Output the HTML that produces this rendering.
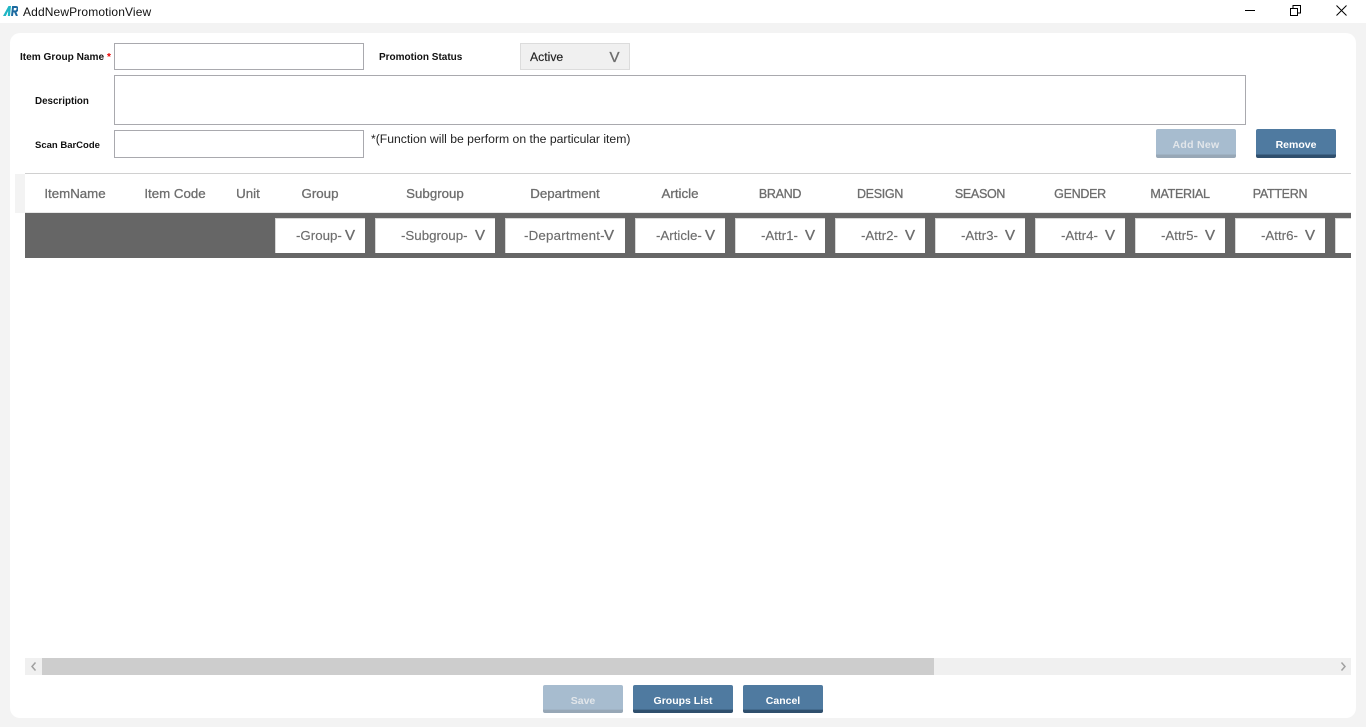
<!DOCTYPE html>
<html><head><meta charset="utf-8"><style>
html,body{margin:0;padding:0;width:1366px;height:727px;overflow:hidden;background:#fff;font-family:"Liberation Sans",sans-serif}
div,span{position:absolute;box-sizing:border-box}
.t{white-space:nowrap;line-height:16px}
.lb{font-size:10.1px;font-weight:bold;color:#111}
.in{border:1px solid #a9a9ae;background:#fff}
.h{font-size:13.3px;color:#6d6d6d;width:120px;text-align:center;top:186px;-webkit-text-stroke:.3px #6d6d6d}
.c{font-size:12.5px;letter-spacing:-.3px}
.dd{top:218px;height:35px;background:#fff;border:1px solid #d8d8d8;border-width:1px 0 0 1px}
.dt{top:228px;font-size:13.3px;color:#6d6d6d;-webkit-text-stroke:.15px #6d6d6d}
.v{top:227px;font-size:15px;color:#6d6d6d;line-height:18px;-webkit-text-stroke:.35px #6d6d6d}
.b{font-size:10.5px;font-weight:bold;color:#fff;text-align:center;border-radius:2px;background:linear-gradient(#4f7aa0 0,#4f7aa0 86%,#2f4f6d 90%,#2f4f6d 100%);line-height:32px}
.b.d{background:linear-gradient(#a7bccf 0,#a7bccf 86%,#97a7b6 90%,#97a7b6 100%);color:#e2e6ea}
</style></head><body>
<div style="left:0;top:23px;width:1366px;height:704px;background:#f3f3f3"></div>
<div style="left:10px;top:33px;width:1346px;height:685px;background:#fff;border-radius:10px"></div>

<svg style="position:absolute;left:3px;top:6px" width="15" height="10" viewBox="0 0 15 10"><path d="M0 10 L5.5 0 L8 0 L7 10 L4.8 10 L5.2 5 L2.8 10 Z" fill="#1fb5c4"/><path d="M9 10 L10 1 L13 1 Q15 1.2 14.5 3.4 Q14 5.4 12 5.7 L14 10 M9.6 5.4 L12 5.4" fill="none" stroke="#1c6aa0" stroke-width="2"/></svg>
<div class="t" style="left:23px;top:4px;font-size:12px;color:#111;letter-spacing:.13px">AddNewPromotionView</div>

<div style="left:1245px;top:10px;width:10px;height:1px;background:#000"></div>
<svg style="position:absolute;left:1290px;top:5px" width="11" height="11" viewBox="0 0 11 11"><path d="M.5 3.5H7.5V10.5H.5ZM3 3.5V.5H10.5V8H7.5" fill="none" stroke="#000"/></svg>
<svg style="position:absolute;left:1336px;top:5px" width="11" height="11" viewBox="0 0 11 11"><path d="M.5 .5L10.5 10.5M10.5 .5L.5 10.5" fill="none" stroke="#000"/></svg>

<div class="t lb" style="left:20px;top:50px">Item Group Name <span style="position:static;color:#e00">*</span></div>
<div class="in" style="left:114px;top:43px;width:250px;height:27px"></div>
<div class="t lb" style="left:379px;top:50px;font-size:10px">Promotion Status</div>
<div style="left:520px;top:43px;width:110px;height:27px;background:#f0f0f0;border:1px solid #dcdcdc"></div>
<div class="t" style="left:530px;top:49px;font-size:12.2px;color:#222;-webkit-text-stroke:.15px #222">Active</div>
<div class="t" style="left:609.5px;top:50px;font-size:15px;color:#6d6d6d;-webkit-text-stroke:.35px #6d6d6d">V</div>

<div class="t lb" style="left:35px;top:94px;font-size:9.8px">Description</div>
<div class="in" style="left:114px;top:75px;width:1132px;height:50px"></div>
<div class="t lb" style="left:35px;top:138px;font-size:9.5px">Scan BarCode</div>
<div class="in" style="left:114px;top:130px;width:250px;height:28px"></div>
<div class="t" style="left:371px;top:131px;font-size:12.2px;color:#222">*(Function will be perform on the particular item)</div>

<div class="b d" style="left:1156px;top:129px;width:80px;height:29px;letter-spacing:.3px">Add New</div>
<div class="b" style="left:1256px;top:129px;width:80px;height:29px">Remove</div>

<div style="left:15px;top:174px;width:10px;height:39px;background:#f3f3f3"></div>
<div style="left:25px;top:173px;width:1326px;height:1px;background:#d0d0d0"></div>
<div style="left:25px;top:212px;width:1326px;height:1px;background:#e8e8e8"></div>
<div style="left:25px;top:213px;width:1326px;height:45px;background:#666"></div>

<div class="t h" style="left:15px">ItemName</div>
<div class="t h" style="left:115px">Item Code</div>
<div class="t h" style="left:188px">Unit</div>
<div class="t h" style="left:260px">Group</div>
<div class="t h" style="left:375px">Subgroup</div>
<div class="t h" style="left:505px">Department</div>
<div class="t h" style="left:620px">Article</div>
<div class="t h c" style="left:720px">BRAND</div>
<div class="t h c" style="left:820px">DESIGN</div>
<div class="t h c" style="left:920px">SEASON</div>
<div class="t h c" style="left:1020px">GENDER</div>
<div class="t h c" style="left:1120px">MATERIAL</div>
<div class="t h c" style="left:1220px">PATTERN</div>

<div class="dd" style="left:275px;width:90px"></div><div class="t dt" style="left:296px">-Group-</div><div class="t v" style="left:345px">V</div>
<div class="dd" style="left:375px;width:120px"></div><div class="t dt" style="left:401px">-Subgroup-</div><div class="t v" style="left:475px">V</div>
<div class="dd" style="left:505px;width:120px"></div><div class="t dt" style="left:524px;letter-spacing:.2px">-Department-</div><div class="t v" style="left:604px">V</div>
<div class="dd" style="left:635px;width:90px"></div><div class="t dt" style="left:656px">-Article-</div><div class="t v" style="left:705px">V</div>
<div class="dd" style="left:735px;width:90px"></div><div class="t dt" style="left:761px">-Attr1-</div><div class="t v" style="left:805px">V</div>
<div class="dd" style="left:835px;width:90px"></div><div class="t dt" style="left:861px">-Attr2-</div><div class="t v" style="left:905px">V</div>
<div class="dd" style="left:935px;width:90px"></div><div class="t dt" style="left:961px">-Attr3-</div><div class="t v" style="left:1005px">V</div>
<div class="dd" style="left:1035px;width:90px"></div><div class="t dt" style="left:1061px">-Attr4-</div><div class="t v" style="left:1105px">V</div>
<div class="dd" style="left:1135px;width:90px"></div><div class="t dt" style="left:1161px">-Attr5-</div><div class="t v" style="left:1205px">V</div>
<div class="dd" style="left:1235px;width:90px"></div><div class="t dt" style="left:1261px">-Attr6-</div><div class="t v" style="left:1305px">V</div>
<div class="dd" style="left:1335px;width:16px"></div>

<div style="left:25px;top:658px;width:1326px;height:17px;background:#f0f0f0"></div>
<div style="left:42px;top:658px;width:892px;height:17px;background:#cdcdcd"></div>
<svg style="position:absolute;left:30px;top:662px" width="8" height="9" viewBox="0 0 8 9"><path d="M5.5 .5L2 4.5L5.5 8.5" fill="none" stroke="#a0a0a0" stroke-width="1.5"/></svg>
<svg style="position:absolute;left:1339px;top:662px" width="8" height="9" viewBox="0 0 8 9"><path d="M2.5 .5L6 4.5L2.5 8.5" fill="none" stroke="#a0a0a0" stroke-width="1.5"/></svg>

<div class="b d" style="left:543px;top:685px;width:80px;height:28px">Save</div>
<div class="b" style="left:633px;top:685px;width:100px;height:28px">Groups List</div>
<div class="b" style="left:743px;top:685px;width:80px;height:28px">Cancel</div>
</body></html>
